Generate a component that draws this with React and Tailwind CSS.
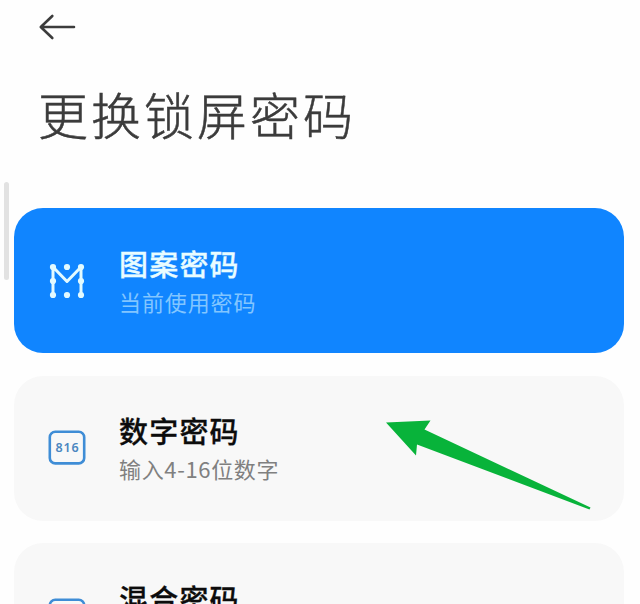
function BackIcon() {
  return (
    <svg viewBox="0 0 38 28" className="h-7 w-[38px]" fill="none" stroke="#3c3c3c" strokeWidth="2.6" strokeLinecap="round" strokeLinejoin="round">
      <path d="M36 14H3M14.3 3L2.8 14L14.3 25" />
    </svg>
  )
}

function PatternIcon() {
  const dots = [
    [5, 5], [19, 5], [33, 5],
    [5, 19], [33, 19],
    [5, 33], [19, 33], [33, 33],
  ]

  return (
    <svg viewBox="0 0 38 38" className="size-[38px]" fill="#e2faff">
      <path d="M5 33V5L19 19.5L33 5V33" fill="none" stroke="#e2faff" strokeWidth="3" strokeLinejoin="round" />
      {dots.map(([x, y]) => (
        <circle key={`${x}-${y}`} cx={x} cy={y} r="3.1" />
      ))}
    </svg>
  )
}

function BoxIcon({ label }) {
  return (
    <svg viewBox="0 0 38 36" className="h-9 w-[38px]">
      <rect x="1.8" y="1.8" width="34.4" height="31.6" rx="5.5" fill="none" stroke="#3f8dd6" strokeWidth="2.6" />
      <text
        x="19.5"
        y="22.2"
        textAnchor="middle"
        fill="#4a86c0"
        className="font-['Noto_Sans',sans-serif] text-[12.5px] font-semibold tracking-[0.8px]"
      >
        {label}
      </text>
    </svg>
  )
}

function OptionCard({ icon, title, subtitle, active }) {
  return (
    <button
      type="button"
      className={[
        'flex h-[145px] w-full shrink-0 items-center rounded-[29px] pl-[33px] text-left',
        active ? 'bg-[#1085ff] text-[#e8fcff]' : 'bg-[#f8f8f8] text-[#0c0c0c]',
      ].join(' ')}
    >
      <span className="flex w-[39px] shrink-0 justify-center">{icon}</span>
      <span className="ml-[33px] flex flex-col pt-0.5">
        <span className="text-[29px] leading-[38px] font-medium tracking-[1.2px] [-webkit-text-stroke:0.3px_currentColor]">
          {title}
        </span>
        <span
          className={[
            'text-[22px] leading-[38px]',
            active ? 'tracking-[0.9px] text-[#82c5ff]' : 'tracking-[0.65px] text-[#808080]',
          ].join(' ')}
        >
          {subtitle}
        </span>
      </span>
    </button>
  )
}

export default function App() {
  return (
    <div className="relative h-[604px] w-[640px] overflow-hidden bg-[#fefefe] font-['Noto_Sans_CJK_SC',sans-serif]">
      <header className="flex flex-col items-start pl-[38px]">
        <button type="button" aria-label="返回" className="mt-[13px]">
          <BackIcon />
        </button>
        <h1 className="mt-[35px] text-[50px] leading-[74px] font-light tracking-[3px] text-[#3b3b3b] [-webkit-text-stroke:0.5px_currentColor]">
          更换锁屏密码
        </h1>
      </header>

      <main className="mt-[58px] flex flex-col gap-[22.5px] pr-4 pl-3.5">
        <OptionCard active icon={<PatternIcon />} title="图案密码" subtitle="当前使用密码" />
        <OptionCard icon={<BoxIcon label="816" />} title="数字密码" subtitle="输入4-16位数字" />
        <OptionCard icon={<BoxIcon label="A1b" />} title="混合密码" subtitle="输入4-16位字符" />
      </main>

      <div className="absolute top-[182px] left-1 h-[98px] w-[5px] rounded-full bg-[#e2e2e2]" />

      <svg viewBox="0 0 206 92" className="absolute top-[419px] left-[386px] h-[92px] w-[206px]" fill="#08b33a">
        <path d="M0 3.5L44.5 1.5L38.5 10.5L204.5 88.5L203.5 90.5L31 25.5L30 36.5Z" />
      </svg>
    </div>
  )
}
